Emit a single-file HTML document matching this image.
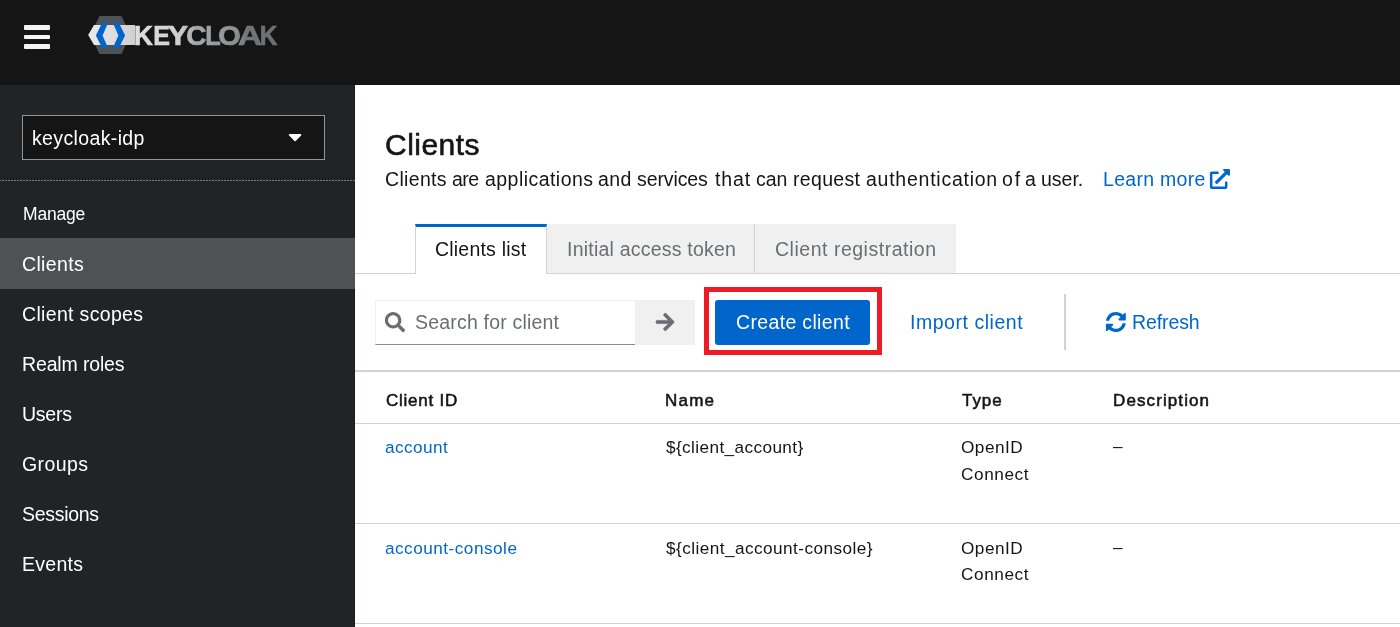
<!DOCTYPE html>
<html lang="en">
<head>
<meta charset="utf-8">
<title>Keycloak Admin Console - Clients</title>
<style>
*{box-sizing:border-box;margin:0;padding:0}
html,body{width:1400px;height:627px;overflow:hidden;background:#fff}
body{font-family:"Liberation Sans","DejaVu Sans",sans-serif;color:#151515;position:relative}
.abs{position:absolute;white-space:nowrap}
svg.abs{z-index:2}
div.abs[id],span.abs[id]{will-change:transform}
#header{left:0;top:0;width:1400px;height:85px;background:#151515}
#sidebar{left:0;top:85px;width:355px;height:542px;background:#212427;border-right:1px solid #191b1d}
.burger{left:24px;width:26.2px;height:4.6px;background:#f4f4f4;border-radius:1px}
#realmbox{left:22px;top:115px;width:303px;height:45px;background:#151515;border:1px solid #939699}
#dots{left:-1px;top:180px;width:356px;height:1px;background:repeating-linear-gradient(90deg,#787b7e 0,#787b7e 2px,transparent 2px,transparent 3px)}
#navsel{left:0;top:238px;width:355px;height:51px;background:#4f5255}
.tab{top:224px;height:49px;background:#f0f0f0}
#tabline{left:355px;top:273px;width:1045px;height:1px;background:#d2d2d2}
#tab1{left:415px;width:132px;height:50px;background:#fff;border-top:3px solid #0066cc;border-left:1px solid #d2d2d2;border-right:1px solid #d2d2d2}
#tab2{left:547px;width:208px;border-right:1px solid #d2d2d2}
#tab3{left:755px;width:201px}
#search{left:375px;top:300px;width:260px;height:45px;background:#fff;border:1px solid #f0f0f0;border-right:0;border-bottom:1px solid #8a8d90}
#go{left:635px;top:300px;width:60px;height:45px;background:#f0f0f0}
#redbox{left:704px;top:287px;width:178px;height:68px;border:5px solid #ed1c24}
#create{left:715px;top:300px;width:155px;height:45px;background:#0066cc;border-radius:3px}
#vdiv{left:1064px;top:294px;width:2px;height:56px;background:#d2d2d2}
.hline{left:355px;width:1045px;height:1px;background:#d2d2d2}
</style>
</head>
<body>
<div id="header" class="abs"></div>
<div class="abs burger" style="top:25.2px"></div>
<div class="abs burger" style="top:34.800px"></div>
<div class="abs burger" style="top:44.300px"></div>
<svg class="abs" style="left:80px;top:10px" width="210" height="50" viewBox="80 10 210 50">
  <defs>
    <linearGradient id="lg" gradientUnits="userSpaceOnUse" x1="136" x2="278" y1="0" y2="0"><stop offset="0" stop-color="#dedede"/><stop offset="0.30" stop-color="#d0d0d0"/><stop offset="0.42" stop-color="#a4a7aa"/><stop offset="0.70" stop-color="#8f9295"/><stop offset="0.78" stop-color="#72767a"/><stop offset="1" stop-color="#6a6e73"/></linearGradient>
    <linearGradient id="bg" gradientUnits="userSpaceOnUse" x1="88" x2="135" y1="0" y2="0"><stop offset="0" stop-color="#ececec"/><stop offset="1" stop-color="#cfcfcf"/></linearGradient>
  </defs>
  <polygon points="90.500,35 99.400,16 121.500,16 130.400,35 121.500,54 99.400,54" fill="#4d5256"/>
  <polygon points="88.200,35 94,25 135,25 135,45 94,45" fill="url(#bg)"/>
  <polygon points="102,23.1 108,23.1 102.600,35.400 108,47.700 102,47.700 95.900,35.400" fill="#0066cc"/>
  <polygon points="113,23.1 119,23.1 125.100,35.400 119,47.700 113,47.700 118.400,35.400" fill="#0066cc"/>
  <text y="45" font-family="Liberation Sans, sans-serif" font-weight="bold" font-size="27.500" fill="url(#lg)" stroke="url(#lg)" stroke-width="0.7" id="logot"><tspan x="134.00" textLength="18.87" lengthAdjust="spacingAndGlyphs">K</tspan><tspan x="153.18" textLength="16.74" lengthAdjust="spacingAndGlyphs">E</tspan><tspan x="167.89" textLength="20.39" lengthAdjust="spacingAndGlyphs">Y</tspan><tspan x="186.28" textLength="20.19" lengthAdjust="spacingAndGlyphs">C</tspan><tspan x="205.16" textLength="15.48" lengthAdjust="spacingAndGlyphs">L</tspan><tspan x="218.25" textLength="22.58" lengthAdjust="spacingAndGlyphs">O</tspan><tspan x="238.09" textLength="23.94" lengthAdjust="spacingAndGlyphs">A</tspan><tspan x="259.82" textLength="17.65" lengthAdjust="spacingAndGlyphs">K</tspan></text>
</svg>
<div id="sidebar" class="abs"></div>
<div id="realmbox" class="abs"></div>
<svg class="abs" style="left:287px;top:124px" width="24" height="24" viewBox="0 0 24 24"><path transform="translate(1.33,1.88) scale(0.0423)" d="M31.300 192h257.300c17.800 0 26.700 21.500 14.100 34.100L174.100 354.800c-7.800 7.800-20.500 7.800-28.300 0L17.200 226.100C4.600 213.500 13.500 192 31.300 192z" fill="#fff"/></svg>
<div id="dots" class="abs"></div>
<div id="navsel" class="abs"></div>

<svg class="abs" style="left:1208px;top:167px" width="24" height="24" viewBox="0 0 24 24"><path transform="translate(1.90,1.90) scale(0.0392)" d="M432,320H400a16,16,0,0,0-16,16V448H64V128H208a16,16,0,0,0,16-16V80a16,16,0,0,0-16-16H48A48,48,0,0,0,0,112V464a48,48,0,0,0,48,48H400a48,48,0,0,0,48-48V336A16,16,0,0,0,432,320ZM488,0h-128c-21.370,0-32.050,25.910-17,41l35.730,35.730L135,320.370a24,24,0,0,0,0,34L157.670,377a24,24,0,0,0,34,0L435.280,133.320,471,169c15,15,41,4.500,41-17V24A24,24,0,0,0,488,0Z" fill="#0066cc"/></svg>

<div id="tabline" class="abs"></div>
<div id="tab1" class="abs tab"></div>
<div id="tab2" class="abs tab"></div>
<div id="tab3" class="abs tab"></div>

<div id="search" class="abs"></div>
<svg class="abs" style="left:383px;top:311px" width="24" height="24" viewBox="0 0 24 24"><path transform="translate(1.90,1.00) scale(0.0395)" d="M505 442.700L405.300 343c-4.500-4.500-10.600-7-17-7H372c27.600-35.300 44-79.700 44-128C416 93.100 322.900 0 208 0S0 93.100 0 208s93.100 208 208 208c48.300 0 92.700-16.400 128-44v16.300c0 6.400 2.500 12.500 7 17l99.700 99.700c9.400 9.400 24.600 9.400 33.900 0l28.300-28.300c9.400-9.400 9.400-24.600.1-34zM208 336c-70.700 0-128-57.200-128-128 0-70.700 57.200-128 128-128 70.700 0 128 57.200 128 128 0 70.700-57.200 128-128 128z" fill="#6a6e73"/></svg>
<div id="go" class="abs"></div>
<svg class="abs" style="left:655px;top:310px" width="24" height="24" viewBox="0 0 24 24"><path transform="translate(1.10,1.70) scale(0.0402)" d="M190.500 66.900l22.200-22.200c9.400-9.400 24.600-9.400 33.900 0L441 239c9.400 9.400 9.400 24.600 0 33.900L246.600 467.300c-9.400 9.400-24.600 9.400-33.900 0l-22.200-22.200c-9.500-9.500-9.300-25 .4-34.300L311.400 296H24c-13.300 0-24-10.700-24-24v-32c0-13.300 10.700-24 24-24h287.400L190.900 101.200c-9.800-9.300-10-24.800-.4-34.300z" fill="#6a6e73" stroke="#6a6e73" stroke-width="16" stroke-linejoin="round"/></svg>
<div id="redbox" class="abs"></div>
<div id="create" class="abs"></div>
<div id="vdiv" class="abs"></div>
<svg class="abs" style="left:1104px;top:310px" width="24" height="24" viewBox="0 0 24 24"><path transform="translate(1.58,1.74) scale(0.0402)" d="M370.720 133.280C339.458 104.008 298.888 87.962 255.848 88c-77.458.068-144.328 53.178-162.791 126.850-1.344 5.363-6.122 9.150-11.651 9.150H24.103c-7.498 0-13.194-6.807-11.807-14.176C33.933 94.924 134.813 8 256 8c66.448 0 126.791 26.136 171.315 68.685L463.030 40.970C478.149 25.851 504 36.559 504 57.941V192c0 13.255-10.745 24-24 24H345.941c-21.382 0-32.090-25.851-16.971-40.971l41.750-41.749zM32 296h134.059c21.382 0 32.090 25.851 16.971 40.971l-41.750 41.750c31.262 29.273 71.835 45.319 114.876 45.280 77.418-.07 144.315-53.144 162.787-126.849 1.344-5.363 6.122-9.150 11.651-9.150h57.304c7.498 0 13.194 6.807 11.807 14.176C478.067 417.076 377.187 504 256 504c-66.448 0-126.791-26.136-171.315-68.685L48.970 471.030C33.851 486.149 8 475.441 8 454.059V320c0-13.255 10.745-24 24-24z" fill="#0066cc"/></svg>

<div class="abs hline" style="top:370px;height:2px"></div>
<div class="abs hline" style="top:423px"></div>
<div class="abs hline" style="top:523px"></div>
<div class="abs hline" style="top:623px"></div>
<div id="realm" class="abs" style="left:32px;top:124px;font-size:19.5px;line-height:29px;color:#fff;letter-spacing:0.363px">keycloak-idp</div>
<div id="manage" class="abs" style="left:23px;top:201px;font-size:17.5px;line-height:26px;color:#fff;letter-spacing:-0.202px">Manage</div>
<div id="n1" class="abs" style="left:22px;top:250px;font-size:19.5px;line-height:29px;color:#fff;letter-spacing:0.343px">Clients</div>
<div id="n2" class="abs" style="left:22px;top:300px;font-size:19.5px;line-height:29px;color:#fff;letter-spacing:0.328px">Client scopes</div>
<div id="n3" class="abs" style="left:22px;top:350px;font-size:19.5px;line-height:29px;color:#fff;letter-spacing:-0.148px">Realm roles</div>
<div id="n4" class="abs" style="left:22px;top:400px;font-size:19.5px;line-height:29px;color:#fff;letter-spacing:-0.259px">Users</div>
<div id="n5" class="abs" style="left:22px;top:450px;font-size:19.5px;line-height:29px;color:#fff;letter-spacing:0.389px">Groups</div>
<div id="n6" class="abs" style="left:22px;top:500px;font-size:19.5px;line-height:29px;color:#fff;letter-spacing:-0.300px">Sessions</div>
<div id="n7" class="abs" style="left:22px;top:550px;font-size:19.5px;line-height:29px;color:#fff;letter-spacing:0.276px">Events</div>
<div id="title" class="abs" style="left:385px;top:122px;font-size:30px;line-height:45px;color:#151515;letter-spacing:0.471px;-webkit-text-stroke:0.6px #151515">Clients</div>
<p id="desc" class="abs" style="left:0;top:0">
<span id="d1" class="abs" style="left:385px;top:165px;font-size:19.5px;line-height:29px;color:#151515;letter-spacing:0.333px">Clients</span>
<span id="d2" class="abs" style="left:452px;top:165px;font-size:19.5px;line-height:29px;color:#151515;letter-spacing:-0.555px">are</span>
<span id="d3" class="abs" style="left:485px;top:165px;font-size:19.5px;line-height:29px;color:#151515;letter-spacing:0.454px">applications</span>
<span id="d4" class="abs" style="left:598px;top:165px;font-size:19.5px;line-height:29px;color:#151515;letter-spacing:0.450px">and</span>
<span id="d5" class="abs" style="left:637px;top:165px;font-size:19.5px;line-height:29px;color:#151515;letter-spacing:-0.099px">services</span>
<span id="d6" class="abs" style="left:715px;top:165px;font-size:19.5px;line-height:29px;color:#151515;letter-spacing:0.852px">that</span>
<span id="d7" class="abs" style="left:756px;top:165px;font-size:19.5px;line-height:29px;color:#151515;letter-spacing:-0.032px">can</span>
<span id="d8" class="abs" style="left:793px;top:165px;font-size:19.5px;line-height:29px;color:#151515;letter-spacing:0.333px">request</span>
<span id="d9" class="abs" style="left:866px;top:165px;font-size:19.5px;line-height:29px;color:#151515;letter-spacing:0.753px">authentication</span>
<span id="d10" class="abs" style="left:1002px;top:165px;font-size:19.5px;line-height:29px;color:#151515;letter-spacing:2.030px">of</span>
<span id="d11" class="abs" style="left:1025px;top:165px;font-size:19.5px;line-height:29px;color:#151515;letter-spacing:0.000px">a</span>
<span id="d12" class="abs" style="left:1041px;top:165px;font-size:19.5px;line-height:29px;color:#151515;letter-spacing:-0.018px">user.</span>
</p>
<div id="learn" class="abs" style="left:1103px;top:165px;font-size:19.5px;line-height:29px;color:#0066cc;letter-spacing:0.290px">Learn more</div>
<div id="tab1t" class="abs" style="left:435px;top:235px;font-size:19.5px;line-height:29px;color:#151515;letter-spacing:0.204px">Clients list</div>
<div id="tab2t" class="abs" style="left:567px;top:235px;font-size:19.5px;line-height:29px;color:#6a6e73;letter-spacing:0.219px">Initial access token</div>
<div id="tab3t" class="abs" style="left:775px;top:235px;font-size:19.5px;line-height:29px;color:#6a6e73;letter-spacing:0.515px">Client registration</div>
<div id="searcht" class="abs" style="left:415px;top:308px;font-size:19.5px;line-height:29px;color:#6a6e73;letter-spacing:0.195px">Search for client</div>
<div id="createt" class="abs" style="left:736px;top:308px;font-size:19.5px;line-height:29px;color:#fff;letter-spacing:0.341px">Create client</div>
<div id="importt" class="abs" style="left:910px;top:308px;font-size:19.5px;line-height:29px;color:#0066cc;letter-spacing:0.538px">Import client</div>
<div id="refresht" class="abs" style="left:1132px;top:308px;font-size:19.5px;line-height:29px;color:#0066cc;letter-spacing:-0.103px">Refresh</div>
<div id="th1" class="abs" style="left:386px;top:388px;font-size:17px;line-height:26px;color:#151515;letter-spacing:0.750px;-webkit-text-stroke:0.55px #151515">Client ID</div>
<div id="th2" class="abs" style="left:665px;top:388px;font-size:17px;line-height:26px;color:#151515;letter-spacing:1.217px;-webkit-text-stroke:0.55px #151515">Name</div>
<div id="th3" class="abs" style="left:962px;top:388px;font-size:17px;line-height:26px;color:#151515;letter-spacing:0.960px;-webkit-text-stroke:0.55px #151515">Type</div>
<div id="th4" class="abs" style="left:1113px;top:388px;font-size:17px;line-height:26px;color:#151515;letter-spacing:1.100px;-webkit-text-stroke:0.55px #151515">Description</div>
<div id="r1a" class="abs" style="left:385px;top:434px;font-size:17.2px;line-height:26px;color:#0066cc;letter-spacing:0.442px">account</div>
<div id="r1b" class="abs" style="left:666px;top:434px;font-size:17.2px;line-height:26px;color:#151515;letter-spacing:0.392px">${client_account}</div>
<div id="r1c" class="abs" style="left:961px;top:434px;font-size:17.2px;line-height:26px;color:#151515;letter-spacing:0.502px">OpenID</div>
<div id="r1d" class="abs" style="left:961px;top:461px;font-size:17.2px;line-height:26px;color:#151515;letter-spacing:0.586px">Connect</div>
<div id="r1e" class="abs" style="left:1113px;top:433px;font-size:17.2px;line-height:26px;color:#151515;letter-spacing:-0.700px">–</div>
<div id="r2a" class="abs" style="left:385px;top:535px;font-size:17.2px;line-height:26px;color:#0066cc;letter-spacing:0.484px">account-console</div>
<div id="r2b" class="abs" style="left:666px;top:535px;font-size:17.2px;line-height:26px;color:#151515;letter-spacing:0.446px">${client_account-console}</div>
<div id="r2c" class="abs" style="left:961px;top:535px;font-size:17.2px;line-height:26px;color:#151515;letter-spacing:0.502px">OpenID</div>
<div id="r2d" class="abs" style="left:961px;top:561px;font-size:17.2px;line-height:26px;color:#151515;letter-spacing:0.586px">Connect</div>
<div id="r2e" class="abs" style="left:1113px;top:534px;font-size:17.2px;line-height:26px;color:#151515;letter-spacing:-0.700px">–</div>
</body>
</html>
